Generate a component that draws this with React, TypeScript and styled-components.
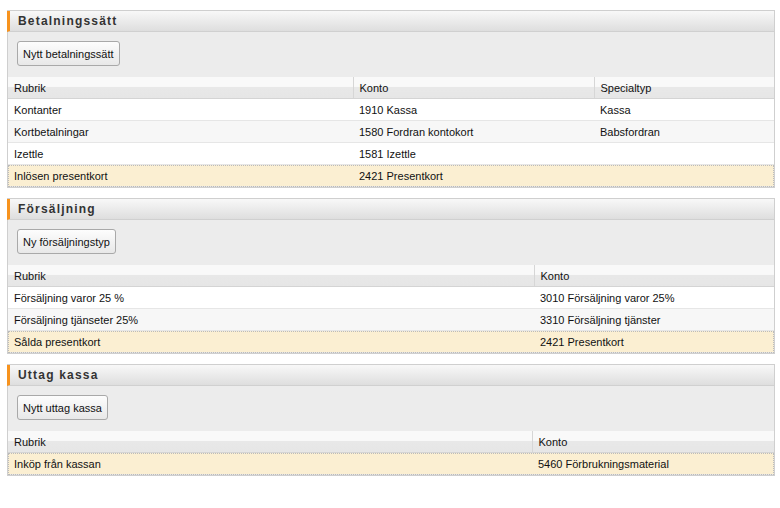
import React from "react";
import styled, { createGlobalStyle } from "styled-components";

type Section = {
  title: string;
  button: string;
  columns: { label: string; width: number }[];
  rows: string[][];
  highlight: number;
};

const sections: Section[] = [
  {
    title: "Betalningssätt",
    button: "Nytt betalningssätt",
    columns: [
      { label: "Rubrik", width: 345 },
      { label: "Konto", width: 241 },
      { label: "Specialtyp", width: 180 },
    ],
    rows: [
      ["Kontanter", "1910 Kassa", "Kassa"],
      ["Kortbetalningar", "1580 Fordran kontokort", "Babsfordran"],
      ["Izettle", "1581 Izettle", ""],
      ["Inlösen presentkort", "2421 Presentkort", ""],
    ],
    highlight: 3,
  },
  {
    title: "Försäljning",
    button: "Ny försäljningstyp",
    columns: [
      { label: "Rubrik", width: 526 },
      { label: "Konto", width: 240 },
    ],
    rows: [
      ["Försäljning varor 25 %", "3010 Försäljning varor 25%"],
      ["Försäljning tjänseter 25%", "3310 Försäljning tjänster"],
      ["Sålda presentkort", "2421 Presentkort"],
    ],
    highlight: 2,
  },
  {
    title: "Uttag kassa",
    button: "Nytt uttag kassa",
    columns: [
      { label: "Rubrik", width: 524 },
      { label: "Konto", width: 242 },
    ],
    rows: [["Inköp från kassan", "5460 Förbrukningsmaterial"]],
    highlight: 0,
  },
];

const App: React.FC = () => {
  return (
    <>
      <GlobalStyle />
      <Page>
        {sections.map((s) => (
          <Panel key={s.title}>
            <PanelHeader>{s.title}</PanelHeader>
            <Toolbar>
              <Button>{s.button}</Button>
            </Toolbar>
            <Table>
              <colgroup>
                {s.columns.map((c) => (
                  <col key={c.label} style={{ width: c.width }} />
                ))}
              </colgroup>
              <thead>
                <tr>
                  {s.columns.map((c) => (
                    <Th key={c.label}>{c.label}</Th>
                  ))}
                </tr>
              </thead>
              <tbody>
                {s.rows.map((r, i) => (
                  <Row key={i} $odd={i % 2 === 1} $active={i === s.highlight}>
                    {r.map((cell, j) => (
                      <Td key={j}>{cell}</Td>
                    ))}
                  </Row>
                ))}
              </tbody>
            </Table>
          </Panel>
        ))}
      </Page>
    </>
  );
};

const GlobalStyle = createGlobalStyle`
  body {
    margin: 0;
    background: #fff;
    font-family: "Liberation Sans", Arial, sans-serif;
    font-size: 11px;
    color: #111;
  }
`;
const Page = styled.div`
  display: flex;
  flex-direction: column;
  gap: 10px;
  padding: 10px 5px 0 7px;
  width: 768px;
`;
const Panel = styled.div`
  border: 1px solid #cfcfcf;
  background: #ececec;
`;
const PanelHeader = styled.div`
  height: 20px;
  line-height: 21px;
  border-left: 3px solid #f7931e;
  border-bottom: 1px solid #d0d0d0;
  padding-left: 8px;
  background: linear-gradient(#f8f8f8, #dedede);
  font-size: 12px;
  font-weight: bold;
  letter-spacing: 1.2px;
  color: #333;
  margin-left: -1px;
`;
const Toolbar = styled.div`
  padding: 9px 9px 11px;
  height: 25px;
`;
const Button = styled.button`
  height: 25px;
  padding: 0 5px;
  border: 1px solid #a9a9a9;
  border-radius: 3px;
  background: linear-gradient(#fdfdfd, #e8e8e8);
  font-family: "Liberation Sans", Arial, sans-serif;
  font-size: 11px;
  color: #111;
  cursor: pointer;
`;
const Table = styled.table`
  width: 100%;
  border-collapse: collapse;
  table-layout: fixed;
`;
const Th = styled.th`
  height: 21px;
  padding: 0 6px;
  text-align: left;
  font-weight: normal;
  background: linear-gradient(#f9f9f9 0%, #f9f9f9 45%, #e8e8e8 50%, #e6e6e6 100%);
  border-bottom: 1px solid #d4d4d4;
  border-left: 1px solid #d6d6d6;
  &:first-child {
    border-left: none;
  }
`;
const Row = styled.tr<{ $odd: boolean; $active: boolean }>`
  background: ${(p) => (p.$active ? "#fbefd2" : p.$odd ? "#f7f7f7" : "#fff")};
  outline: ${(p) => (p.$active ? "1px dotted #bbb" : "none")};
  outline-offset: -1px;
  border-bottom: 1px solid #e6e6e6;
`;
const Td = styled.td`
  height: 21px;
  padding: 0 6px;
  white-space: nowrap;
`;

export default App;
